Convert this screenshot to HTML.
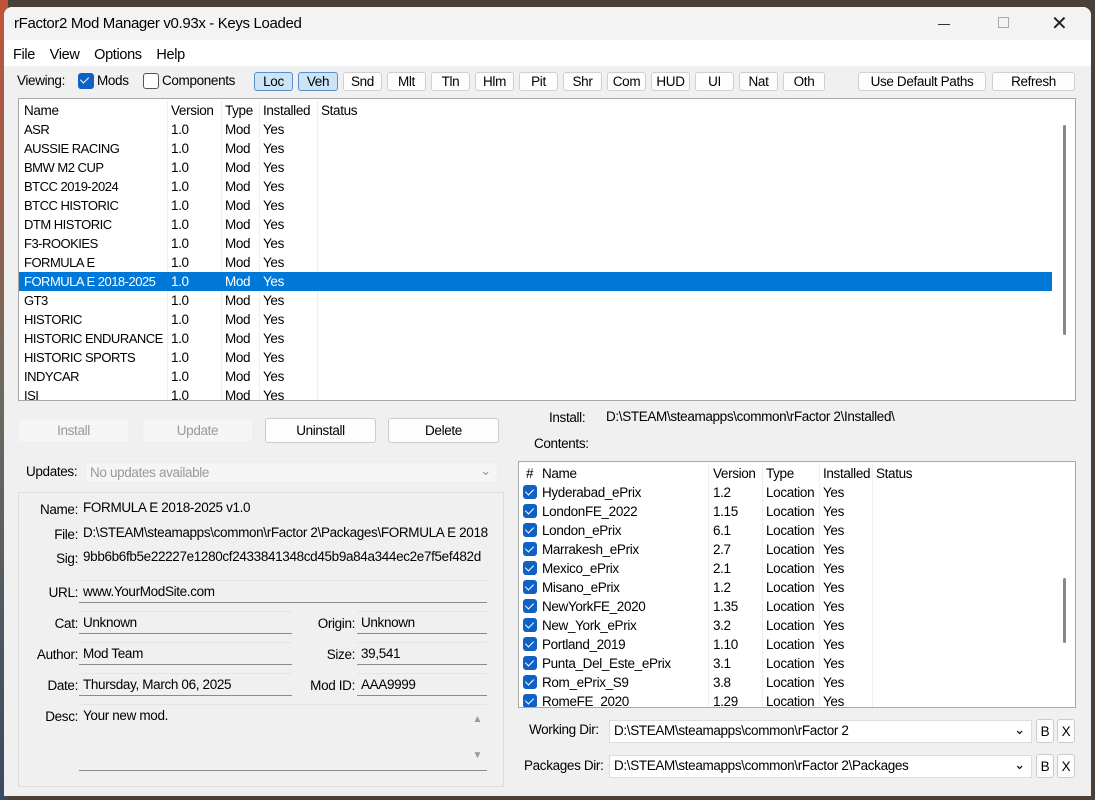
<!DOCTYPE html>
<html><head><style>
*{box-sizing:border-box;margin:0;padding:0}
body{width:1095px;height:800px;overflow:hidden;background:#4a4038;font-family:"Liberation Sans",sans-serif;font-size:13.5px;letter-spacing:-0.35px;color:#000;position:relative}
.bgl{position:absolute;left:0;top:0;width:8px;height:800px;background:linear-gradient(#c0543a,#6b6a60 50%,#3a4a60)}
.win{position:absolute;left:4px;top:7px;width:1087px;height:789px;background:#f0f0f0;border-radius:8px 8px 0 0;overflow:hidden}
.a{position:absolute;white-space:nowrap}
.title{left:0;top:0;width:100%;height:33px;background:#f3f3f3}
.menu{left:0;top:33px;width:100%;height:26px;background:#fff}
.btn{position:absolute;height:19px;background:#fdfdfd;border:1px solid #d0d0d0;border-radius:3px;text-align:center;line-height:17px;font-size:13.5px}
.btn.on{background:#cce4f7;border-color:#5a8fc8}
.tbl{position:absolute;background:#fff;border:1px solid #a8a8a8}
.row{position:absolute;left:0;height:19px;line-height:19px;width:100%}
.row span{position:absolute}
.cb{display:inline-block;width:14px;height:14px;background:#0f62c4;border-radius:3px;position:absolute;top:2px}
.cb:after{content:"";position:absolute;left:4px;top:2px;width:4px;height:7px;border:solid #fff;border-width:0 1.5px 1.5px 0;transform:rotate(45deg)}
.fld{position:absolute;height:23px;background:#f0f0f0;border-bottom:1px solid #8a8a8a;border-top:1px solid #e4e4e4;padding:2px 4px;line-height:17px}
.lbl{position:absolute;text-align:right;line-height:19px}
.big{position:absolute;height:25px;border-radius:3px;text-align:center;line-height:23px;border:1px solid #ccc;background:#fdfdfd}
</style></head><body>
<div class="bgl"></div>
<div class="win">
<div class="a title"></div>
<div class="a" style="left:10px;top:8px;font-size:15px">rFactor2 Mod Manager v0.93x - Keys Loaded</div>
<div class="a" style="left:934px;top:17px;width:12px;height:1px;background:#333"></div>
<div class="a" style="left:994px;top:10px;width:11px;height:11px;border:1px solid #aaa"></div>
<div class="a" style="left:1047px;top:4px;font-size:20px;color:#222">✕</div>
<div class="a menu"></div>
<div class="a" style="left:9px;top:40px;font-size:14.5px;word-spacing:0">File&nbsp;&nbsp;&nbsp; View&nbsp;&nbsp;&nbsp; Options&nbsp;&nbsp;&nbsp; Help</div>
<div class="a" style="left:13px;top:66px">Viewing:</div>
<i class="cb" style="left:74px;top:66px;width:16px;height:16px"></i>
<div class="a" style="left:93px;top:66px">Mods</div>
<div class="a" style="left:139px;top:66px;width:16px;height:16px;border:1px solid #555;border-radius:3px;background:#fff"></div>
<div class="a" style="left:158px;top:66px">Components</div>
<div class="btn on" style="left:250px;top:65px;width:39px">Loc</div>
<div class="btn on" style="left:294px;top:65px;width:40px">Veh</div>
<div class="btn" style="left:339px;top:65px;width:39px">Snd</div>
<div class="btn" style="left:383px;top:65px;width:39px">Mlt</div>
<div class="btn" style="left:427px;top:65px;width:39px">Tln</div>
<div class="btn" style="left:471px;top:65px;width:39px">Hlm</div>
<div class="btn" style="left:515px;top:65px;width:39px">Pit</div>
<div class="btn" style="left:559px;top:65px;width:39px">Shr</div>
<div class="btn" style="left:603px;top:65px;width:39px">Com</div>
<div class="btn" style="left:647px;top:65px;width:39px">HUD</div>
<div class="btn" style="left:691px;top:65px;width:39px">UI</div>
<div class="btn" style="left:735px;top:65px;width:39px">Nat</div>
<div class="btn" style="left:779px;top:65px;width:42px">Oth</div>
<div class="btn" style="left:854px;top:65px;width:128px">Use Default Paths</div>
<div class="btn" style="left:988px;top:65px;width:83px">Refresh</div>

<div class="tbl" style="left:14px;top:91px;width:1058px;height:303px;overflow:hidden">
<div class="a" style="left:1044px;top:26px;width:3px;height:210px;background:#888;border-radius:2px"></div>
<div class="row" style="top:2px"><span style="left:5px">Name</span><span style="left:152px">Version</span><span style="left:206px">Type</span><span style="left:244px">Installed</span><span style="left:302px">Status</span></div>
<div class="a" style="left:148px;top:2px;width:1px;height:300px;background:#eee"></div>
<div class="a" style="left:202px;top:2px;width:1px;height:300px;background:#eee"></div>
<div class="a" style="left:240px;top:2px;width:1px;height:300px;background:#eee"></div>
<div class="a" style="left:298px;top:2px;width:1px;height:300px;background:#eee"></div>
<div id="rows"></div>
</div>

<div class="big" style="left:14px;top:411px;width:111px;background:#f5f5f5;color:#999;border-color:#eee">Install</div>
<div class="big" style="left:138px;top:411px;width:111px;background:#f5f5f5;color:#999;border-color:#eee">Update</div>
<div class="big" style="left:261px;top:411px;width:111px">Uninstall</div>
<div class="big" style="left:384px;top:411px;width:111px">Delete</div>
<div class="a" style="left:22px;top:457px">Updates:</div>
<div class="a" style="left:81px;top:455px;width:413px;height:21px;background:#f5f5f5;color:#999;padding:2px 4px;border:1px solid #eee">No updates available<span style="position:absolute;right:6px;top:0">⌄</span></div>
<div class="a" style="left:14px;top:485px;width:486px;height:295px;border:1px solid #ddd"></div>
<div class="lbl" style="left:10px;width:64px;top:493px">Name:</div><div class="a" style="left:79px;top:493px">FORMULA E 2018-2025 v1.0</div>
<div class="lbl" style="left:10px;width:64px;top:518px">File:</div><div class="a" style="left:79px;top:518px;width:407px;overflow:hidden">D:\STEAM\steamapps\common\rFactor 2\Packages\FORMULA E 2018</div>
<div class="lbl" style="left:10px;width:64px;top:542px">Sig:</div><div class="a" style="left:79px;top:542px;width:407px;overflow:hidden">9bb6b6fb5e22227e1280cf2433841348cd45b9a84a344ec2e7f5ef482d</div>
<div class="lbl" style="left:10px;width:64px;top:576px">URL:</div><div class="fld" style="left:75px;top:573px;width:408px">www.YourModSite.com</div>
<div class="lbl" style="left:10px;width:64px;top:607px">Cat:</div><div class="fld" style="left:75px;top:604px;width:213px">Unknown</div>
<div class="lbl" style="left:10px;width:64px;top:638px">Author:</div><div class="fld" style="left:75px;top:635px;width:213px">Mod Team</div>
<div class="lbl" style="left:10px;width:64px;top:669px">Date:</div><div class="fld" style="left:75px;top:666px;width:213px">Thursday, March 06, 2025</div>
<div class="lbl" style="left:290px;width:61px;top:607px">Origin:</div><div class="fld" style="left:353px;top:604px;width:130px">Unknown</div>
<div class="lbl" style="left:290px;width:61px;top:638px">Size:</div><div class="fld" style="left:353px;top:635px;width:130px">39,541</div>
<div class="lbl" style="left:290px;width:61px;top:669px">Mod ID:</div><div class="fld" style="left:353px;top:666px;width:130px">AAA9999</div>
<div class="lbl" style="left:10px;width:64px;top:700px">Desc:</div><div class="fld" style="left:75px;top:697px;width:408px;height:67px">Your new mod.<span style="position:absolute;right:5px;top:6px;color:#999;font-size:10px">▲</span><span style="position:absolute;right:5px;bottom:6px;color:#999;font-size:10px">▼</span></div>

<div class="a" style="left:545px;top:403px">Install:</div>
<div class="a" style="left:602px;top:402px">D:\STEAM\steamapps\common\rFactor 2\Installed\</div>
<div class="a" style="left:530px;top:429px">Contents:</div>
<div class="tbl" style="left:514px;top:454px;width:558px;height:247px;overflow:hidden">
<div class="a" style="left:544px;top:116px;width:3px;height:65px;background:#888;border-radius:2px"></div>
<div class="row" style="top:2px"><span style="left:7px">#</span><span style="left:23px">Name</span><span style="left:194px">Version</span><span style="left:247px">Type</span><span style="left:304px">Installed</span><span style="left:357px">Status</span></div>
<div class="a" style="left:189px;top:2px;width:1px;height:245px;background:#eee"></div>
<div class="a" style="left:243px;top:2px;width:1px;height:245px;background:#eee"></div>
<div class="a" style="left:300px;top:2px;width:1px;height:245px;background:#eee"></div>
<div class="a" style="left:353px;top:2px;width:1px;height:245px;background:#eee"></div>
<div id="rows2"></div>
</div>
<div class="a" style="left:525px;top:715px">Working Dir:</div>
<div class="a" style="left:605px;top:713px;width:423px;height:23px;background:#fff;border:1px solid #ddd;padding:2px 4px">D:\STEAM\steamapps\common\rFactor 2<span style="position:absolute;right:6px;top:1px">⌄</span></div>
<div class="big" style="left:1032px;top:712px;width:18px;height:24px">B</div>
<div class="big" style="left:1053px;top:712px;width:18px;height:24px">X</div>
<div class="a" style="left:520px;top:751px">Packages Dir:</div>
<div class="a" style="left:605px;top:748px;width:423px;height:23px;background:#fff;border:1px solid #ddd;padding:2px 4px">D:\STEAM\steamapps\common\rFactor 2\Packages<span style="position:absolute;right:6px;top:1px">⌄</span></div>
<div class="big" style="left:1032px;top:747px;width:18px;height:24px">B</div>
<div class="big" style="left:1053px;top:747px;width:18px;height:24px">X</div>
</div>
<script>
var n=["ASR","AUSSIE RACING","BMW M2 CUP","BTCC 2019-2024","BTCC HISTORIC","DTM HISTORIC","F3-ROOKIES","FORMULA E","FORMULA E 2018-2025","GT3","HISTORIC","HISTORIC ENDURANCE","HISTORIC SPORTS","INDYCAR","ISI"];
var h="";n.forEach(function(s,i){var sel=i==8;h+='<div class="row" style="top:'+(21+i*19)+'px;width:1033px;'+(sel?'background:#0078d7;color:#fff':'')+'"><span style="left:5px;font-size:13px;letter-spacing:-0.5px">'+s+'</span><span style="left:152px">1.0</span><span style="left:206px">Mod</span><span style="left:244px">Yes</span></div>';});
document.getElementById("rows").innerHTML=h;
var m=[["Hyderabad_ePrix","1.2"],["LondonFE_2022","1.15"],["London_ePrix","6.1"],["Marrakesh_ePrix","2.7"],["Mexico_ePrix","2.1"],["Misano_ePrix","1.2"],["NewYorkFE_2020","1.35"],["New_York_ePrix","3.2"],["Portland_2019","1.10"],["Punta_Del_Este_ePrix","3.1"],["Rom_ePrix_S9","3.8"],["RomeFE_2020","1.29"]];
h="";m.forEach(function(r,i){h+='<div class="row" style="top:'+(21+i*19)+'px;width:535px"><i class="cb" style="left:4px"></i><span style="left:23px">'+r[0]+'</span><span style="left:194px">'+r[1]+'</span><span style="left:247px">Location</span><span style="left:304px">Yes</span></div>';});
document.getElementById("rows2").innerHTML=h;
</script>
</body></html>
